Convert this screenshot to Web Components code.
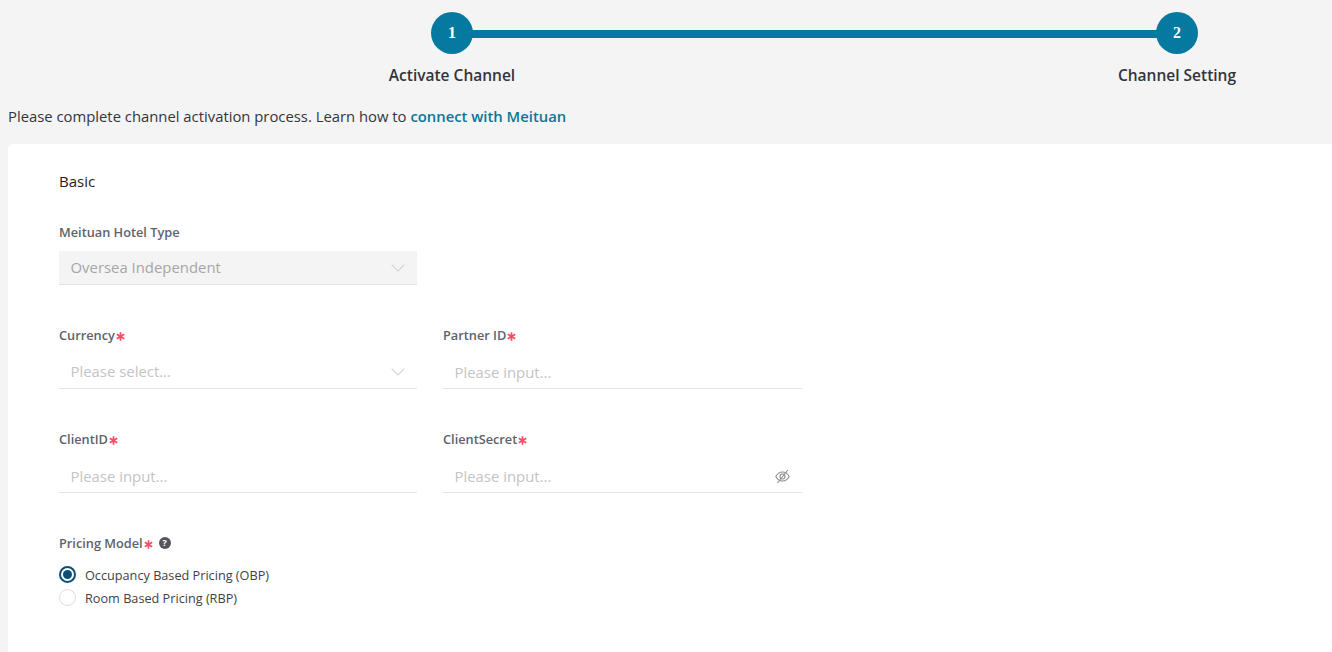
<!DOCTYPE html>
<html><head><meta charset="utf-8">
<style>
html,body{margin:0;padding:0;background:#f4f4f4;height:652px;overflow:hidden;font-family:"Open Sans",sans-serif;color:#33353c}
</style></head><body>
<channel-page>
  <step-bar></step-bar>
  <p-intro>Please complete channel activation process. Learn how to <a slot="link">connect with Meituan</a></p-intro>
  <form-card heading="Basic">
    <form-grid>
      <form-field label="Meituan Hotel Type"><select-box value="Oversea Independent" disabled></select-box></form-field>
      <span></span>
      <form-field label="Currency" required><select-box placeholder="Please select..."></select-box></form-field>
      <form-field label="Partner ID" required><input-box></input-box></form-field>
      <form-field label="ClientID" required><input-box></input-box></form-field>
      <form-field label="ClientSecret" required><input-box eye></input-box></form-field>
      <form-field label="Pricing Model" required help>
        <radio-item checked>Occupancy Based Pricing (OBP)</radio-item>
        <radio-item>Room Based Pricing (RBP)</radio-item>
      </form-field>
    </form-grid>
  </form-card>
</channel-page>
<script>
function def(name, css, html){
  customElements.define(name, class extends HTMLElement{
    connectedCallback(){
      if(this.shadowRoot) return;
      const r=this.attachShadow({mode:'open'});
      r.innerHTML='<style>'+css+'</style>'+(typeof html==='function'?html(this):html);
    }
  });
}
def('channel-page',':host{display:flex;flex-direction:column}','<slot></slot>');
def('step-bar',`
:host{display:grid;grid-template-columns:42px 683px 42px;grid-template-rows:42px auto;justify-content:start;padding:12px 0 0 431px;font-family:"Open Sans",sans-serif}
.c{width:42px;height:42px;border-radius:50%;background:#05799f;color:#fff;display:flex;align-items:center;justify-content:center;font:700 16px/1 "Liberation Serif",serif;z-index:1}
.l{align-self:center;height:8px;background:#05799f;margin:2px -2px 0}
.t{grid-row:2;justify-self:center;white-space:nowrap;margin-top:12px;font-size:15.5px;line-height:19px;font-weight:600;color:#33353c}
.t1{grid-column:1}.t2{grid-column:3}
`,`<div class="c">1</div><div class="l"></div><div class="c">2</div><div class="t t1">Activate Channel</div><div class="t t2">Channel Setting</div>`);
def('p-intro',`
:host{display:block;margin:22px 0 0 8px;height:37px;font-size:14.83px;line-height:19px;color:#33353c}
::slotted(a){color:#0e7497;font-weight:600}
`,`<slot></slot><slot name="link"></slot>`);
def('form-card',`
:host{display:block;margin-left:8px;background:#fff;border-radius:6px 0 0 0;padding:28px 51px 0;height:520px;box-sizing:border-box}
h2{margin:0 0 32px;font-size:15px;line-height:19px;font-weight:500;color:#1f2025}
`,e=>`<h2>${e.getAttribute('heading')}</h2><slot></slot>`);
def('form-grid',`:host{display:grid;grid-template-columns:358px 359px;column-gap:26px;grid-auto-rows:104px}`,'<slot></slot>');
def('form-field',`
:host{display:block}
.lab{display:flex;align-items:center;height:18px;font-size:12.75px;line-height:18px;font-weight:600;color:#60626a;margin-bottom:10px;white-space:nowrap}
.lab.req{margin-top:-1px;margin-bottom:11px}
.star{margin-left:1px;width:9px;height:9px;display:block;margin-top:2px}
.help{margin-left:6px;width:12px;height:12px;border-radius:50%;background:#55565b;color:#fff;font-size:9px;font-weight:700;line-height:12px;text-align:center}
`,e=>`<div class="lab${e.hasAttribute('required')?' req':''}">${e.getAttribute('label')}${e.hasAttribute('required')?'<svg class="star" viewBox="0 0 9 9"><path d="M4.5 .2V8.8M.8 2.3 8.2 6.7M8.2 2.3.8 6.700" stroke="#fb4a62" stroke-width="1.7" fill="none"/></svg>':''}${e.hasAttribute('help')?'<span class="help">?</span>':''}</div><slot></slot>`);
const boxCss=`
:host{display:flex;align-items:center;justify-content:space-between;height:34px;box-sizing:border-box;padding:0 12px 0 11.5px;border-bottom:1px solid #e3e3e3;font-size:14.9px;line-height:19px;color:#c4c4c4}
:host([disabled]){background:#f4f4f4;color:#a6a6a6}
svg{display:block;flex:none}
`;
def('select-box',boxCss,e=>`<span>${e.getAttribute('value')||e.getAttribute('placeholder')}</span><svg width="14" height="8" viewBox="0 0 14 8"><path d="M.7.7 7 7 13.3.7" fill="none" stroke="#d2d2d2" stroke-width="1.1"/></svg>`);
def('input-box',boxCss+`span{margin-top:1px}svg{margin-top:2px}`,e=>`<span>Please input...</span>${e.hasAttribute('eye')?`<svg width="15" height="15" viewBox="0 0 15 15" fill="none" stroke="#8c8c8c" stroke-width="1.1"><path d="M.8 7.500C2.500 4.400 4.800 3 7.500 3s5 1.400 6.700 4.500c-1.700 3.100-4 4.500-6.700 4.500S2.500 10.600.8 7.500Z"/><circle cx="7.500" cy="7.500" r="2.500"/><path d="M2.500 14 12.800 1"/></svg>`:''}`);
def('radio-item',`
:host{display:flex;align-items:center;height:23px;font-size:12.7px;line-height:16px;color:#3f4148}
:host([checked]){margin-top:9px}
.r{width:17px;height:17px;box-sizing:border-box;border-radius:50%;border:1px solid #dcdcdc;margin-right:9px;display:flex;align-items:center;justify-content:center;background:#fff}
:host([checked]) .r{border:2px solid #0b4f78}
:host([checked]) .r::after{content:"";width:9px;height:9px;border-radius:50%;background:#0b4f78}
`,`<span class="r"></span><slot></slot>`);
</script>
</body></html>
